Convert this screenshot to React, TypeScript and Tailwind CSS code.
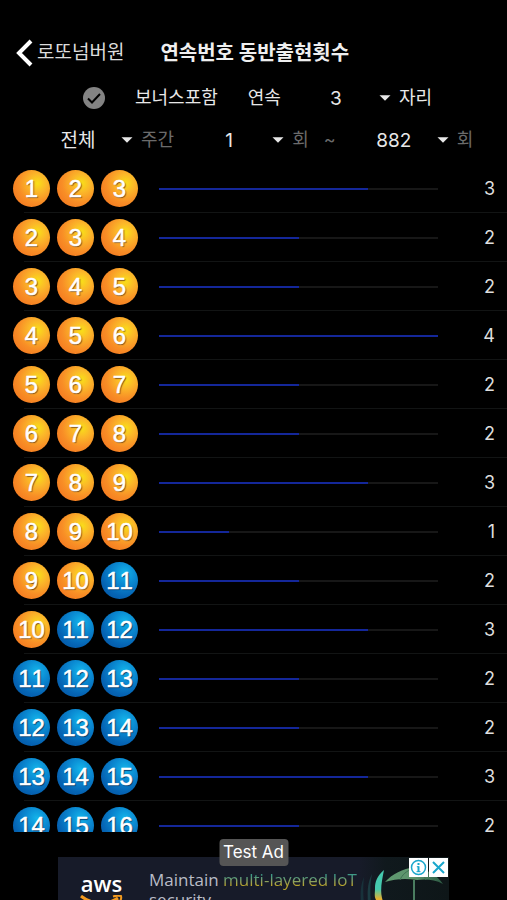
import React from "react";

const ROUNDS: { first: number; count: number }[] = [3, 2, 2, 4, 2, 2, 3, 1, 2, 3, 2, 2, 3, 2].map(
  (count, i) => ({ first: i + 1, count })
);
const MAX_COUNT = 4;

function Ball({ value }: { value: number }) {
  const tone =
    value <= 10
      ? "bg-[radial-gradient(circle_at_66%_36%,#f9e018_0%,#fbb829_26%,#f88e26_56%,#f26c1c_100%)] [text-shadow:1px_1px_1px_#7a4a18]"
      : "bg-[radial-gradient(circle_at_64%_30%,#14b4ea_0%,#0a8ad2_32%,#0564b4_66%,#04509c_100%)] [text-shadow:1px_1px_1px_#02305f]";
  return (
    <span
      className={`flex size-[37px] shrink-0 items-center justify-center rounded-full font-['Liberation_Sans',Arial,sans-serif] text-2xl leading-6 text-white [font-kerning:none] [-webkit-text-stroke:0.5px_white] ${tone}`}
    >
      {value}
    </span>
  );
}

function Picker({ label, value }: { label: string; value: string }) {
  return (
    <span className="grid w-[110px] items-center">
      <select
        aria-label={label}
        defaultValue={value}
        className="col-start-1 row-start-1 h-7 w-full appearance-none bg-transparent text-center text-[19px] text-[#e8e8e8] [text-align-last:center]"
      >
        <option value={value}>{value}</option>
      </select>
      <svg
        aria-hidden="true"
        viewBox="0 0 12 6"
        className="pointer-events-none col-start-1 row-start-1 h-[6px] w-3 justify-self-end fill-[#e8e8e8]"
      >
        <path d="M0.5 0.3h11L6 5.8z" />
      </svg>
    </span>
  );
}

function Row({ first, count }: { first: number; count: number }) {
  return (
    <li className="relative flex h-[49px] shrink-0 items-center pr-3 pl-[13px] after:absolute after:right-0 after:bottom-0 after:left-6 after:h-px after:bg-[#121414]">
      <div className="flex gap-[7px]">
        <Ball value={first} />
        <Ball value={first + 1} />
        <Ball value={first + 2} />
      </div>
      <div
        role="progressbar"
        aria-label={`${first}–${first + 2}`}
        aria-valuenow={count}
        aria-valuemax={MAX_COUNT}
        className="ml-[21px] h-[2px] flex-1 bg-[#171717]"
      >
        <div className="h-full bg-[#14279a]" style={{ width: `${(count / MAX_COUNT) * 100}%` }} />
      </div>
      <span className="w-[57px] text-right text-lg text-[#dedede]">{count}</span>
    </li>
  );
}

function Ad() {
  return (
    <a
      href="#ad"
      className="relative mx-auto flex h-[61px] w-[391px] max-w-full overflow-hidden bg-[#171b29] font-['Open_Sans','Noto_Sans',sans-serif]"
    >
      <div className="ml-[22px] w-[43px] shrink-0 pt-[14px]">
        <div className="text-center text-[22px] leading-6 font-semibold text-white">aws</div>
        <svg viewBox="0 0 43 14" className="h-[14px] w-[43px]" fill="none" stroke="#f29a1f">
          <path d="M1 1C12 10 28 10 38 3" strokeWidth="3" />
          <path d="M33 1.500c3-1 6-1 8-.5.6 2-.6 5-2.500 7" strokeWidth="2" />
        </svg>
      </div>
      <p className="ml-[26px] shrink-0 pt-[13px] text-[17px] leading-5 whitespace-nowrap text-[#b9bcc6]">
        Maintain{" "}
        <span className="bg-linear-to-b from-[#3f9a86] from-35% to-[#b5a32c] to-75% bg-clip-text text-transparent">
          multi-layered IoT
        </span>
        <br />
        security
      </p>
      <svg viewBox="0 0 92 61" className="absolute top-0 right-0 h-[61px] w-[92px]" aria-hidden="true">
        <defs>
          <linearGradient id="flame" x1="0" y1="0" x2="0" y2="1">
            <stop offset="0.4" stopColor="#45c9ae" />
            <stop offset="0.6" stopColor="#e6b030" />
          </linearGradient>
          <linearGradient id="canopy" x1="0" y1="0" x2="1" y2="0">
            <stop offset="0" stopColor="#5f9a70" />
            <stop offset="0.5" stopColor="#5d936c" />
            <stop offset="1" stopColor="#2c5a43" />
          </linearGradient>
          <linearGradient id="night" x1="0" y1="0" x2="1" y2="0">
            <stop offset="0" stopColor="#171b29" />
            <stop offset="0.3" stopColor="#10191d" />
            <stop offset="1" stopColor="#0e1618" />
          </linearGradient>
        </defs>
        <rect x="2" width="90" height="61" fill="url(#night)" />
        <path d="M7 20c-3 7-4 14-3 27h3c-1-12-1-18 0-27z" fill="#18313a" />
        <path d="M15 17c-4 8-5 16-4 30h3c-1-12-1-20 1-30z" fill="#1b3c42" />
        <path d="M27 13c-7 6-9 12-9 18 0 6-1 8 1 12v18h6c-1-12 2-14 0-20-2-8 0-18 2-28z" fill="url(#flame)" />
        <path d="M28 25C35 17 46 12 57 10c13 2 23 8 29 17-9-5-18-5-26-4-12-2-22-1-32 2z" fill="url(#canopy)" />
        <path d="M57 11C49 14 45 18 43 23M57 11c6 3 10 7 12 12" fill="none" stroke="#3f7254" />
        <path d="M57 23v38" stroke="#4a7d60" strokeWidth="2" />
      </svg>
      <span className="absolute top-px right-px flex gap-px">
        <svg viewBox="0 0 19 19" className="size-[19px] bg-white" fill="none" stroke="#1aa7cc" aria-hidden="true">
          <circle cx="9.500" cy="9.500" r="7" strokeWidth="1.500" />
          <path d="M9.500 8.300V14M9.500 5v2" strokeWidth="2" />
          <path d="M7.800 8.700h2M7.500 13.700h4" />
        </svg>
        <svg viewBox="0 0 19 19" className="size-[19px] bg-white" fill="none" stroke="#1aa7cc" aria-hidden="true">
          <path d="M4 4l11 11M15 4L4 15" strokeWidth="2" />
        </svg>
      </span>
    </a>
  );
}

export default function App() {
  return (
    <div className="flex h-screen flex-col overflow-hidden bg-black font-[Inter,'Noto_Sans_CJK_KR',sans-serif] text-lg text-[#e8e8e8]">
      <header className="flex items-center pt-[37px] pl-4">
        <button type="button" className="flex h-8 items-center gap-1 text-[19px] text-[#dcdcdc]">
          <svg viewBox="0 0 17 28" className="h-7 w-[17px]" fill="none" stroke="white" strokeWidth="4" aria-hidden="true">
            <path d="M15 2L3 14l12 12" />
          </svg>
          로또넘버원
        </button>
        <h1 className="ml-9 text-xl leading-8 font-bold text-[#efefef]">연속번호 동반출현횟수</h1>
      </header>

      <div className="mt-[15px] flex h-7 items-center pl-[83px]">
        <label className="flex items-center gap-[30px]">
          <span className="grid">
            <input
              type="checkbox"
              defaultChecked
              className="col-start-1 row-start-1 size-[22px] appearance-none rounded-full bg-[#838383]"
            />
            <svg
              viewBox="0 0 22 22"
              className="pointer-events-none col-start-1 row-start-1 size-[22px]"
              fill="none"
              stroke="black"
              strokeWidth="2"
              aria-hidden="true"
            >
              <path d="M5 11.500l4 4 8-8.500" />
            </svg>
          </span>
          보너스포함
        </label>
        <span className="ml-[30px]">연속</span>
        <Picker label="연속 자리" value="3" />
        <span className="ml-2">자리</span>
      </div>

      <div className="mt-[14px] flex h-7 items-center pl-[23px] text-[#6b6b6b]">
        <Picker label="주간" value="전체" />
        <span className="ml-2">주간</span>
        <Picker label="시작 회" value="1" />
        <span className="ml-2">회</span>
        <span className="ml-3 w-[18px] text-center">~</span>
        <Picker label="끝 회" value="882" />
        <span className="ml-2">회</span>
      </div>

      <ul className="mt-[10px] flex min-h-0 flex-1 flex-col overflow-hidden">
        {ROUNDS.map((r) => (
          <Row key={r.first} first={r.first} count={r.count} />
        ))}
      </ul>

      <footer className="relative h-[68px] shrink-0 overflow-hidden pt-[25px]">
        <Ad />
        <span className="absolute top-[7px] left-1/2 -translate-x-1/2 rounded-sm bg-[#555555] px-1 text-[17px] leading-[27px] whitespace-nowrap text-white">
          Test Ad
        </span>
      </footer>
    </div>
  );
}
